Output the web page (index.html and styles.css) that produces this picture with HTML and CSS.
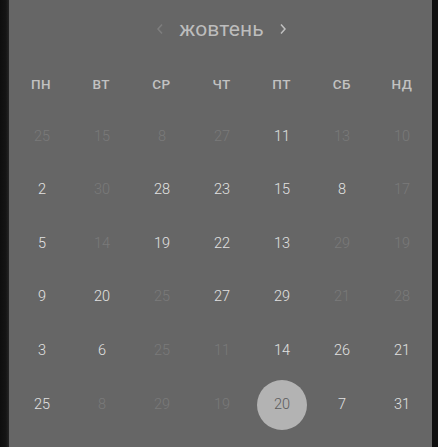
FILE: index.html
```html
<!DOCTYPE html>
<html lang="uk">
<head>
<meta charset="utf-8">
<link rel="stylesheet" href="styles.css">
</head>
<body>
<div class="frame">
  <div class="edge-left"></div>
  <div class="panel">
    <div class="header">
      <button class="nav prev" aria-label="prev"><svg width="8" height="12" viewBox="0 0 8 12"><polyline points="6,1.5 2,6 6,10.5" fill="none" stroke="currentColor" stroke-width="1.5"/></svg></button>
      <span class="month">жовтень</span>
      <button class="nav next" aria-label="next"><svg width="8" height="12" viewBox="0 0 8 12"><polyline points="2,1.5 6,6 2,10.5" fill="none" stroke="currentColor" stroke-width="1.5"/></svg></button>
    </div>
    <div class="weekdays">
      <span>ПН</span><span>ВТ</span><span>СР</span><span>ЧТ</span><span>ПТ</span><span>СБ</span><span>НД</span>
    </div>
    <div class="days">
      <span class="d dim">25</span><span class="d dim">15</span><span class="d dim">8</span><span class="d dim">27</span><span class="d">11</span><span class="d dim">13</span><span class="d dim">10</span>
      <span class="d">2</span><span class="d dim">30</span><span class="d">28</span><span class="d">23</span><span class="d">15</span><span class="d">8</span><span class="d dim">17</span>
      <span class="d">5</span><span class="d dim">14</span><span class="d">19</span><span class="d">22</span><span class="d">13</span><span class="d dim">29</span><span class="d dim">19</span>
      <span class="d">9</span><span class="d">20</span><span class="d dim">25</span><span class="d">27</span><span class="d">29</span><span class="d dim">21</span><span class="d dim">28</span>
      <span class="d">3</span><span class="d">6</span><span class="d dim">25</span><span class="d dim">11</span><span class="d">14</span><span class="d">26</span><span class="d">21</span>
      <span class="d">25</span><span class="d dim">8</span><span class="d dim">29</span><span class="d dim">19</span><span class="d sel"><span class="dot">20</span></span><span class="d">7</span><span class="d">31</span>
    </div>
  </div>
  <div class="edge-right"></div>
</div>
</body>
</html>
```

FILE: styles.css
```css
html, body {
  margin: 0;
  padding: 0;
  height: 100%;
  background: #111;
}
body {
  font-family: Roboto, "Noto Sans", "Liberation Sans", sans-serif;
}
.frame {
  display: flex;
  height: 447px;
  overflow: hidden;
}
.edge-left {
  width: 9px;
  background: linear-gradient(to right, #0e0e0e 0, #151515 6px, #262626 9px);
}
.edge-right {
  width: 6px;
  background: #101010;
}
.panel {
  flex: 1;
  background: #666666;
  display: flex;
  flex-direction: column;
}
.header {
  height: 59px;
  display: flex;
  align-items: center;
  justify-content: center;
  gap: 14px;
  padding-left: 2px;
}
.month {
  color: #bdbdbd;
  font-size: 21px;
  font-weight: 400;
  letter-spacing: 0.1px;
  line-height: 1;
}
.nav {
  background: none;
  border: 0;
  padding: 0;
  display: flex;
  align-items: center;
  justify-content: center;
  width: 10px;
  height: 14px;
  margin-top: -2px;
}
.prev { color: #7e7e7e; }
.next { color: #c0c0c0; }
.weekdays {
  height: 50px;
  padding-left: 2px;
  display: grid;
  grid-template-columns: repeat(7, 1fr);
  align-items: center;
  justify-items: center;
  color: #c2c2c2;
  font-size: 13.5px;
  font-weight: 500;
  letter-spacing: 0.4px;
}
.days {
  display: grid;
  margin-top: 1px;
  padding-left: 3px;
  grid-template-columns: repeat(7, 1fr);
  grid-auto-rows: 53.6px;
  align-items: center;
  justify-items: center;
  font-size: 14.5px;
  font-weight: 300;
}
.d {
  color: #e2e2e2;
  line-height: 1;
}
.d.dim {
  color: #7a7a7a;
}
.dot {
  display: flex;
  align-items: center;
  justify-content: center;
  width: 50px;
  height: 50px;
  border-radius: 50%;
  background: #b3b3b3;
  color: #5c5c5c;
}
```
